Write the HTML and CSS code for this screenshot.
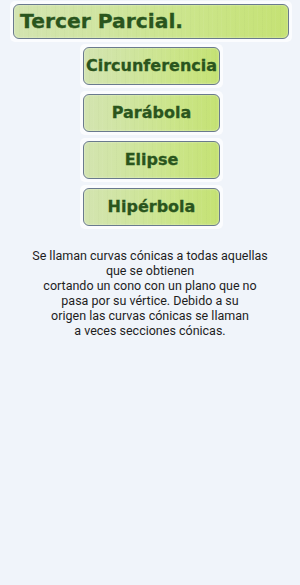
FILE: index.html
```html
<!DOCTYPE html>
<html lang="es">
<head>
<meta charset="utf-8">
<link rel="stylesheet" href="styles.css">
</head>
<body>
<div class="page">
  <div class="frame title-frame">
    <div class="tex title">Tercer Parcial.</div>
  </div>
  <div class="menu">
    <div class="frame btn-frame"><div class="tex btn">Circunferencia</div></div>
    <div class="frame btn-frame"><div class="tex btn">Parábola</div></div>
    <div class="frame btn-frame"><div class="tex btn">Elipse</div></div>
    <div class="frame btn-frame"><div class="tex btn">Hipérbola</div></div>
  </div>
  <p class="desc">Se llaman curvas cónicas a todas aquellas<br>que se obtienen<br>cortando un cono con un plano que no<br>pasa por su vértice. Debido a su<br>origen las curvas cónicas se llaman<br>a veces secciones cónicas.</p>
</div>
</body>
</html>
```
FILE: styles.css
```css
html, body {
  margin: 0;
  padding: 0;
  background: #f0f4fa;
}
.page {
  width: 300px;
  min-height: 585px;
  padding-top: 1px;
  box-sizing: border-box;
}
.frame {
  background: #fbfcfe;
  border-radius: 5px;
  padding: 3px;
  box-sizing: border-box;
}
.title-frame {
  width: 282px;
  margin-left: 10px;
}
.tex {
  box-sizing: border-box;
  border: 1.5px solid #6a7a8e;
  border-radius: 6px;
  background:
    repeating-linear-gradient(90deg, rgba(255,255,255,0.04) 0 1px, rgba(0,0,0,0) 1px 5px, rgba(110,130,80,0.035) 5px 6px, rgba(0,0,0,0) 6px 9px),
    linear-gradient(90deg, #d3e4b0 0%, #d0e5a2 30%, #cbe58a 65%, #c5e274 100%);
  color: #2a551d;
  font-family: "DejaVu Sans", Verdana, sans-serif;
  font-weight: bold;
  box-shadow: inset 0 0 2px rgba(255,255,255,0.6);
  -webkit-text-stroke: 0.3px #2a551d;
}
.title {
  height: 35px;
  font-size: 20.3px;
  line-height: 33px;
  padding-left: 6px;
}
.menu {
  display: flex;
  flex-direction: column;
  align-items: center;
  gap: 3px;
  margin-top: 2px;
  margin-left: 3px;
}
.btn-frame {
  width: 143px;
}
.btn {
  height: 38px;
  font-size: 16px;
  line-height: 36px;
  text-align: center;
  white-space: nowrap;
}
.desc {
  margin: 19px 0 0;
  text-align: center;
  font-family: Roboto, "Noto Sans", sans-serif;
  font-size: 12.5px;
  line-height: 15px;
  color: #1e1e1e;
}
```
